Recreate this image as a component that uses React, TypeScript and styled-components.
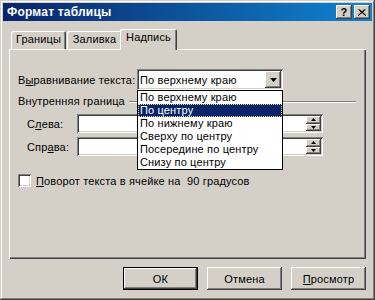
import React from "react";
import styled, { createGlobalStyle, css } from "styled-components";

const FACE = "#d4d0c8";
const SHADOW = "#808080";
const DARK = "#404040";
const HILITE = "#ffffff";

const GlobalStyle = createGlobalStyle`
  html, body { margin: 0; padding: 0; background: ${FACE}; }
  body {
    font-family: "Liberation Sans", Arial, sans-serif;
    font-size: 11px;
    letter-spacing: 0.15px;
    color: #000;
    -webkit-font-smoothing: none;
  }
  #root { width: 375px; height: 300px; }
`;

const raised = css`
  box-shadow: inset -1px -1px 0 ${DARK}, inset 1px 1px 0 ${HILITE},
    inset -2px -2px 0 ${SHADOW}, inset 2px 2px 0 ${FACE};
`;

const sunken = css`
  box-shadow: inset 1px 1px 0 ${SHADOW}, inset -1px -1px 0 ${HILITE},
    inset 2px 2px 0 ${DARK}, inset -2px -2px 0 ${FACE};
`;

const Window = styled.div`
  width: 375px;
  height: 300px;
  box-sizing: border-box;
  padding: 3px;
  background: ${FACE};
  box-shadow: inset -1px -1px 0 ${DARK}, inset 1px 1px 0 ${FACE},
    inset -2px -2px 0 ${SHADOW}, inset 2px 2px 0 ${HILITE};
  display: flex;
  flex-direction: column;
`;

const TitleBar = styled.div`
  height: 18px;
  flex: none;
  display: flex;
  align-items: center;
  padding: 0 2px 0 4px;
  background: linear-gradient(to right, #0a246a, #1084d0);
`;

const TitleText = styled.div`
  flex: 1;
  color: #fff;
  font-weight: bold;
  font-size: 12px;
  letter-spacing: 0.2px;
  white-space: nowrap;
`;

const CaptionButtons = styled.div`
  display: flex;
  gap: 2px;
`;

const CaptionButton = styled.div`
  width: 16px;
  height: 14px;
  box-sizing: border-box;
  background: ${FACE};
  ${raised};
  display: flex;
  align-items: center;
  justify-content: center;
  font-weight: bold;
  font-size: 11px;
  line-height: 14px;
`;

const Body = styled.div`
  flex: 1;
  display: flex;
  flex-direction: column;
  padding: 8px 6px 0 6px;
`;

const TabStrip = styled.div`
  height: 20px;
  display: flex;
  align-items: flex-end;
  padding-left: 2px;
  position: relative;
  z-index: 1;
`;

const Tab = styled.div<{ $active?: boolean; $w: number; $gap?: number }>`
  width: ${(p) => p.$w}px;
  height: ${(p) => (p.$active ? 21 : 18)}px;
  margin-left: ${(p) => p.$gap ?? 0}px;
  margin-bottom: ${(p) => (p.$active ? -1 : 0)}px;
  box-sizing: border-box;
  background: ${FACE};
  border-radius: 2px 2px 0 0;
  box-shadow: inset 1px 1px 0 ${HILITE}, inset -1px 0 0 ${DARK},
    inset -2px 0 0 ${SHADOW};
  display: flex;
  justify-content: center;
  padding-top: 2px;
  position: relative;
  z-index: ${(p) => (p.$active ? 2 : 1)};
`;

const Panel = styled.div`
  position: relative;
  width: 357px;
  height: 210px;
  box-sizing: border-box;
  padding: 20px 10px 0 9px;
  background: ${FACE};
  box-shadow: inset 1px 1px 0 ${HILITE}, inset -1px -1px 0 ${DARK},
    inset -2px -2px 0 ${SHADOW};
  display: flex;
  flex-direction: column;
`;

const FieldRow = styled.div<{ $top: number; $h: number }>`
  display: flex;
  align-items: center;
  margin-top: ${(p) => p.$top}px;
  height: ${(p) => p.$h}px;
`;

const Label = styled.div<{ $w: number; $indent?: number }>`
  width: ${(p) => p.$w}px;
  margin-left: ${(p) => p.$indent ?? 0}px;
  white-space: nowrap;
`;

const Key = styled.span`
  text-decoration: underline;
`;

const Combo = styled.div`
  width: 146px;
  height: 21px;
  box-sizing: border-box;
  background: #fff;
  ${sunken};
  display: flex;
  align-items: center;
  padding: 2px;
`;

const ComboText = styled.div`
  flex: 1;
  padding-left: 1px;
  white-space: nowrap;
`;

const DropButton = styled.div`
  width: 16px;
  height: 17px;
  box-sizing: border-box;
  background: ${FACE};
  ${raised};
  display: flex;
  align-items: center;
  justify-content: center;
`;

const DropList = styled.div`
  position: absolute;
  left: 128px;
  top: 41px;
  width: 146px;
  box-sizing: border-box;
  border: 1px solid #000;
  background: #fff;
  z-index: 5;
`;

const ListItem = styled.div<{ $selected?: boolean }>`
  height: 13px;
  line-height: 13px;
  padding-left: 2px;
  white-space: nowrap;
  box-sizing: border-box;
  ${(p) =>
    p.$selected &&
    css`
      background: #0a246a;
      color: #fff;
      outline: 1px dotted #f4e680;
      outline-offset: -1px;
    `}
`;

const GroupRow = styled.div`
  display: flex;
  align-items: center;
  margin-top: 4px;
  height: 14px;
  gap: 4px;
`;

const EtchedLine = styled.div`
  flex: 1;
  height: 1px;
  background: ${SHADOW};
  border-bottom: 1px solid ${HILITE};
  margin-top: 1px;
`;

const SpinField = styled.div`
  width: 246px;
  height: 19px;
  box-sizing: border-box;
  background: #fff;
  ${sunken};
  padding: 2px;
  display: flex;
  justify-content: flex-end;
`;

const SpinColumn = styled.div`
  width: 15px;
  display: flex;
  flex-direction: column;
`;

const SpinButton = styled.div`
  flex: 1;
  box-sizing: border-box;
  background: ${FACE};
  ${raised};
  display: flex;
  align-items: center;
  justify-content: center;
`;

const CheckRow = styled.div`
  display: flex;
  align-items: center;
  margin-top: 18px;
  height: 13px;
  gap: 5px;
`;

const CheckBox = styled.div`
  width: 13px;
  height: 13px;
  box-sizing: border-box;
  background: #fff;
  ${sunken};
`;

const ButtonRow = styled.div`
  display: flex;
  justify-content: flex-end;
  gap: 9px;
  margin-top: 8px;
`;

const PushButton = styled.div<{ $default?: boolean }>`
  width: 75px;
  height: 23px;
  box-sizing: border-box;
  background: ${FACE};
  display: flex;
  align-items: center;
  justify-content: center;
  ${(p) =>
    p.$default
      ? css`
          box-shadow: inset 0 0 0 1px #000, inset -2px -2px 0 ${DARK},
            inset 2px 2px 0 ${HILITE}, inset -3px -3px 0 ${SHADOW};
        `
      : raised};
`;

const Triangle = ({ w, h, up }: { w: number; h: number; up?: boolean }) => (
  <svg width={w} height={h} viewBox={`0 0 ${w} ${h}`} style={{ display: "block" }}>
    <polygon
      points={up ? `0,${h} ${w},${h} ${w / 2},0` : `0,0 ${w},0 ${w / 2},${h}`}
      fill="#000"
    />
  </svg>
);

const CloseGlyph = () => (
  <svg width="8" height="7" viewBox="0 0 8 7" style={{ display: "block" }}>
    <path d="M0.5 0.5 L7.5 6.5 M7.5 0.5 L0.5 6.5 M1.5 0.5 L8 6.5 M6.5 0.5 L0 6.5" stroke="#000" strokeWidth="1" fill="none" />
  </svg>
);

const items = [
  "По верхнему краю",
  "По центру",
  "По нижнему краю",
  "Сверху по центру",
  "Посередине по центру",
  "Снизу по центру",
];

export default function App() {
  return (
    <>
      <GlobalStyle />
      <Window>
        <TitleBar>
          <TitleText>Формат таблицы</TitleText>
          <CaptionButtons>
            <CaptionButton>?</CaptionButton>
            <CaptionButton>
              <CloseGlyph />
            </CaptionButton>
          </CaptionButtons>
        </TitleBar>
        <Body>
          <TabStrip>
            <Tab $w={55}>Границы</Tab>
            <Tab $w={55} $gap={1}>Заливка</Tab>
            <Tab $w={57} $gap={-2} $active>
              Надпись
            </Tab>
          </TabStrip>
          <Panel>
            <FieldRow $top={0} $h={21}>
              <Label $w={119}>
                В<Key>ы</Key>равнивание текста:
              </Label>
              <Combo>
                <ComboText>По верхнему краю</ComboText>
                <DropButton>
                  <Triangle w={7} h={4} />
                </DropButton>
              </Combo>
            </FieldRow>
            <DropList>
              {items.map((t, i) => (
                <ListItem key={t} $selected={i === 1}>
                  {t}
                </ListItem>
              ))}
            </DropList>
            <GroupRow>
              <span>Внутренняя граница</span>
              <EtchedLine />
            </GroupRow>
            <FieldRow $top={6} $h={19}>
              <Label $w={50} $indent={9}>
                С<Key>л</Key>ева:
              </Label>
              <SpinField>
                <SpinColumn>
                  <SpinButton>
                    <Triangle w={5} h={3} up />
                  </SpinButton>
                  <SpinButton>
                    <Triangle w={5} h={3} />
                  </SpinButton>
                </SpinColumn>
              </SpinField>
            </FieldRow>
            <FieldRow $top={4} $h={19}>
              <Label $w={50} $indent={9}>
                Спр<Key>а</Key>ва:
              </Label>
              <SpinField>
                <SpinColumn>
                  <SpinButton>
                    <Triangle w={5} h={3} up />
                  </SpinButton>
                  <SpinButton>
                    <Triangle w={5} h={3} />
                  </SpinButton>
                </SpinColumn>
              </SpinField>
            </FieldRow>
            <CheckRow>
              <CheckBox />
              <span>
                <Key>П</Key>оворот текста в ячейке на&nbsp; 90 градусов
              </span>
            </CheckRow>
          </Panel>
          <ButtonRow>
            <PushButton $default>ОК</PushButton>
            <PushButton>Отмена</PushButton>
            <PushButton>
              <span>
                <Key>П</Key>росмотр
              </span>
            </PushButton>
          </ButtonRow>
        </Body>
      </Window>
    </>
  );
}
